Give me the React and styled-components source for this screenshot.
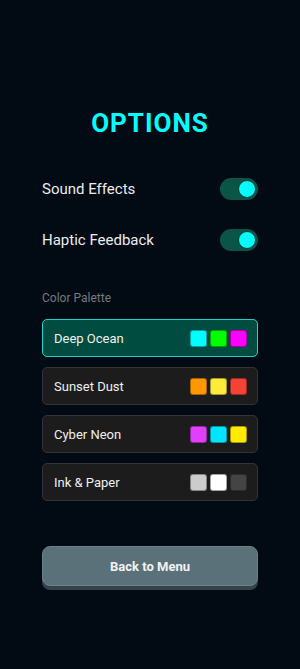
import React, { useState } from 'react';
import styled, { createGlobalStyle } from 'styled-components';

const GlobalStyle = createGlobalStyle`
  html, body {
    margin: 0;
    padding: 0;
    background: #020a14;
  }
  body {
    font-family: Roboto, "Liberation Sans", sans-serif;
    -webkit-font-smoothing: antialiased;
  }
`;

const Screen = styled.div`
  width: 300px;
  min-height: 669px;
  box-sizing: border-box;
  padding: 108px 42px 0;
  background: #020a14;
  display: flex;
  flex-direction: column;
`;

const Title = styled.h1`
  margin: 0 0 40px;
  font-size: 26px;
  line-height: 30px;
  font-weight: 700;
  letter-spacing: 1px;
  text-align: center;
  color: #00ffff;
`;

const SettingRow = styled.div`
  display: flex;
  align-items: center;
  justify-content: space-between;
  height: 22px;
  margin-bottom: 29px;
`;

const SettingLabel = styled.span`
  font-size: 15px;
  color: #ececec;
`;

const Track = styled.button`
  width: 38px;
  height: 22px;
  border: none;
  border-radius: 11px;
  background: ${p => (p.$on ? '#0b5547' : '#2a2f36')};
  display: flex;
  align-items: center;
  justify-content: ${p => (p.$on ? 'flex-end' : 'flex-start')};
  padding: 0 2px;
  box-sizing: border-box;
  cursor: pointer;
`;

const Knob = styled.span`
  width: 18px;
  height: 18px;
  border-radius: 50%;
  box-sizing: border-box;
  background: #00ffff;
  border: 1px solid #0a3a34;
`;

const SectionLabel = styled.div`
  margin-top: 11px;
  margin-bottom: 14px;
  font-size: 12px;
  line-height: 14px;
  color: #727a80;
`;

const PaletteList = styled.div`
  display: flex;
  flex-direction: column;
  gap: 10px;
`;

const PaletteCard = styled.button`
  height: 38px;
  box-sizing: border-box;
  display: flex;
  align-items: center;
  justify-content: space-between;
  padding: 0 10px 0 11px;
  border-radius: 5px;
  border: 1px solid ${p => (p.$active ? '#1fd0c8' : '#343434')};
  background: ${p => (p.$active ? '#004c40' : '#1c1c1c')};
  color: #f0f0f0;
  font-family: inherit;
  font-size: 13px;
  cursor: pointer;
  text-align: left;
`;

const Swatches = styled.div`
  display: flex;
  gap: 3px;
`;

const Swatch = styled.span`
  width: 17px;
  height: 17px;
  border-radius: 3px;
  box-sizing: border-box;
  border: 1px solid rgba(0, 0, 0, 0.35);
  background: ${p => p.$color};
`;

const BackButton = styled.button`
  margin-top: 45px;
  height: 40px;
  border-radius: 8px;
  border: 1px solid #6c828b;
  background: #5b717a;
  color: #f2f2f2;
  font-family: inherit;
  font-weight: 700;
  font-size: 13px;
  box-shadow: 0 4px 0 #34434a;
  cursor: pointer;
`;

const palettes = [
  { name: 'Deep Ocean', colors: ['#00ffff', '#00ff00', '#ff00ff'] },
  { name: 'Sunset Dust', colors: ['#ff9800', '#ffeb3b', '#f44336'] },
  { name: 'Cyber Neon', colors: ['#e040fb', '#00e5ff', '#ffea00'] },
  { name: 'Ink & Paper', colors: ['#cccccc', '#ffffff', '#444444'] },
];

const Toggle = ({ on, onClick }) => (
  <Track $on={on} onClick={onClick}>
    <Knob />
  </Track>
);

export default function App() {
  const [sound, setSound] = useState(true);
  const [haptic, setHaptic] = useState(true);
  const [palette, setPalette] = useState('Deep Ocean');

  return (
    <>
      <GlobalStyle />
      <Screen>
        <Title>OPTIONS</Title>
        <SettingRow>
          <SettingLabel>Sound Effects</SettingLabel>
          <Toggle on={sound} onClick={() => setSound(!sound)} />
        </SettingRow>
        <SettingRow>
          <SettingLabel>Haptic Feedback</SettingLabel>
          <Toggle on={haptic} onClick={() => setHaptic(!haptic)} />
        </SettingRow>

        <SectionLabel>Color Palette</SectionLabel>
        <PaletteList>
          {palettes.map(p => (
            <PaletteCard
              key={p.name}
              $active={palette === p.name}
              onClick={() => setPalette(p.name)}
            >
              {p.name}
              <Swatches>
                {p.colors.map(c => (
                  <Swatch key={c} $color={c} />
                ))}
              </Swatches>
            </PaletteCard>
          ))}
        </PaletteList>

        <BackButton>Back to Menu</BackButton>
      </Screen>
    </>
  );
}
